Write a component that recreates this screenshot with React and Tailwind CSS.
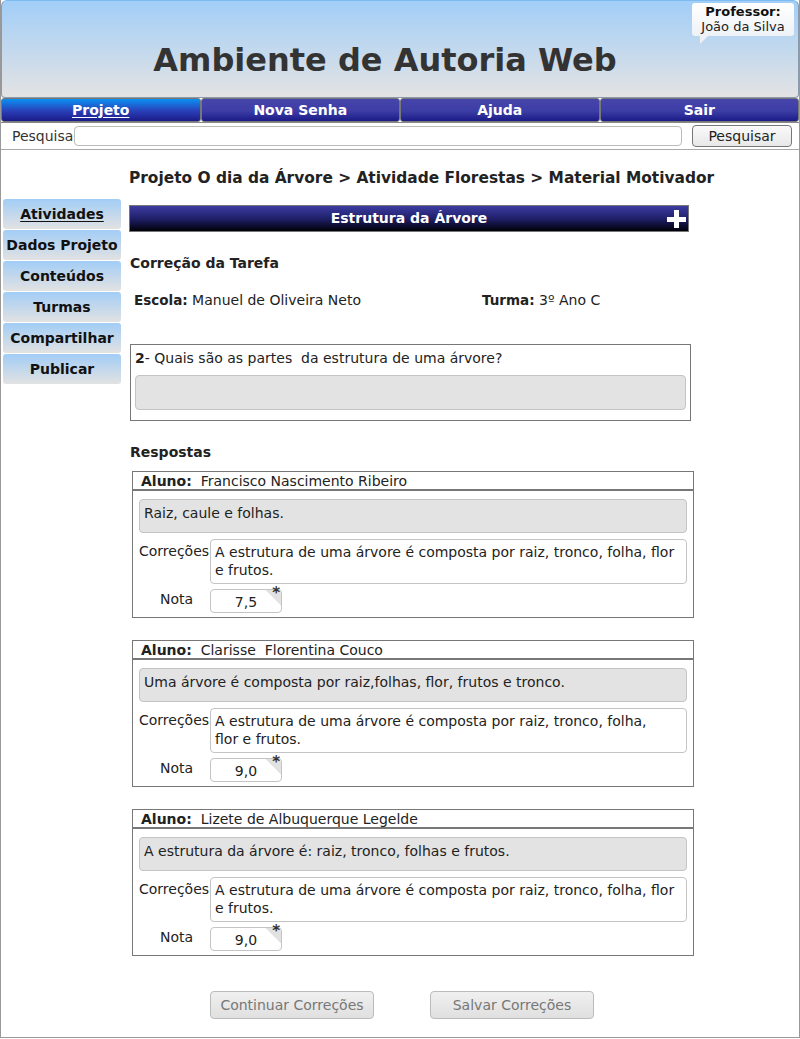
const body = "font-['DejaVu_Sans','Liberation_Sans',sans-serif]";
const bold = "font-['DejaVu_Sans','Liberation_Sans',sans-serif] font-bold";

const TABS = ['Projeto', 'Nova Senha', 'Ajuda', 'Sair'];
const MENU = ['Atividades', 'Dados Projeto', 'Conteúdos', 'Turmas', 'Compartilhar', 'Publicar'];

const ANSWERS = [
  {
    aluno: 'Francisco Nascimento Ribeiro',
    resposta: 'Raiz, caule e folhas.',
    correcao: ['A estrutura de uma árvore é composta por raiz, tronco, folha, flor', 'e frutos.'],
    nota: '7,5',
  },
  {
    aluno: 'Clarisse  Florentina Couco',
    resposta: 'Uma árvore é composta por raiz,folhas, flor, frutos e tronco.',
    correcao: ['A estrutura de uma árvore é composta por raiz, tronco, folha,', 'flor e frutos.'],
    nota: '9,0',
  },
  {
    aluno: 'Lizete de Albuquerque Legelde',
    resposta: 'A estrutura da árvore é: raiz, tronco, folhas e frutos.',
    correcao: ['A estrutura de uma árvore é composta por raiz, tronco, folha, flor', 'e frutos.'],
    nota: '9,0',
  },
];

function AnswerCard({ a }) {
  return (
    <div className="ml-[3px] w-[562px] h-[147px] border border-[#777] bg-white">
      <div className="h-[19px] border-b-[2px] border-[#777] px-2 text-[14px] leading-[18px] text-[#222] whitespace-pre">
        <span className={`${bold} text-[14px]`}>Aluno:</span>{'  '}{a.aluno}
      </div>
      <div className="px-[6px] pt-[8px] pb-[6px]">
        <div className="h-[34px] rounded-[4px] border border-[#c4c4c4] bg-[#e3e3e3] px-[4px] pt-[4px] text-[14px] leading-[18px] text-[#222] whitespace-nowrap">
          {a.resposta}
        </div>
        <div className="mt-[6px] flex">
          <div className="w-[71px] pt-[4px] text-[14px] leading-[16px] text-[#222] whitespace-nowrap">Correções</div>
          <div className="h-[45px] flex-1 rounded-[4px] border border-[#c4c4c4] bg-white px-[4px] pt-[3px] text-[14px] leading-[18px] text-[#222] whitespace-nowrap">
            {a.correcao[0]}
            <br />
            {a.correcao[1]}
          </div>
        </div>
        <div className="mt-[5px] flex items-start">
          <div className="w-[71px] pl-[21px] pt-[1px] text-[14px] leading-[18px] text-[#222]">Nota</div>
          <div className="relative h-[24px] w-[72px] rounded-[4px] border border-[#c4c4c4] bg-white text-center text-[14px] leading-[24px] text-[#222]">
            {a.nota}
            <div className="absolute right-0 top-0 h-[16px] w-[16px] rounded-tr-[4px] bg-[linear-gradient(45deg,#ffffff_50%,#e2e2e2_50%)]" />
            <span className={`${bold} absolute right-[1px] top-[-6px] text-[15px] leading-[18px] text-[#333]`}>*</span>
          </div>
        </div>
      </div>
    </div>
  );
}

export default function App() {
  return (
    <div className={`${body} w-[800px] h-[1039px] bg-white text-[#222]`}>
      <div className="h-[1038px] border-x border-b border-[#999] flex flex-col">
        {/* header */}
        <div className="relative h-[98px] rounded-t-[6px] rounded-b-[4px] border border-[#8a9aab] border-t-[#7cbcf0] bg-[linear-gradient(to_bottom,#a2cef8,#e3e3e3)] flex items-center justify-center">
          <h1 className={`${bold} mt-[22px] mr-[30px] text-[32px] leading-[38px] text-[#333]`}>Ambiente de Autoria Web</h1>
          <div className="absolute right-[4px] top-[2px]">
            <div className="w-[102px] h-[33px] rounded-[3px] bg-[linear-gradient(to_bottom,#ffffff,#eef2f6)] text-center text-[13px] leading-[15px] pt-[1px]">
              <div className={`${bold} text-[13px] text-[#111]`}>Professor:</div>
              <div className="text-[#222]">João da Silva</div>
            </div>
            <div className="ml-[8px] h-0 w-0 border-t-[8px] border-r-[8px] border-t-[#eef2f6] border-r-transparent" />
          </div>
        </div>

        {/* nav */}
        <div className="flex h-[25px] border-b border-[#888]">
          {TABS.map((t, i) => (
            <div
              key={t}
              className={`${bold} flex-1 flex items-center justify-center rounded-[3px] border border-[#777] pt-[1px] text-[14px] text-white ${
                i === 0
                  ? 'bg-[linear-gradient(to_bottom,#0a90f2,#2a3fb8_55%,#1b1b88)] underline underline-offset-2'
                  : 'bg-[linear-gradient(to_bottom,#4545ab,#3d3da6_55%,#1b1b88)]'
              }`}
            >
              {t}
            </div>
          ))}
        </div>

        {/* search */}
        <div className="flex h-[27px] items-center border-b border-[#aaa] pl-[11px] pr-[7px]">
          <span className="text-[14px] text-[#333]">Pesquisa</span>
          <div className="ml-[1px] mr-[10px] h-[20px] flex-1 rounded-[4px] border border-[#bbb] bg-white" />
          <button className="h-[22px] w-[100px] rounded-[4px] border border-[#777] bg-[linear-gradient(to_bottom,#fafafa,#e8e8e8)] text-[14px] text-[#222]">
            Pesquisar
          </button>
        </div>

        {/* body */}
        <div className="flex flex-1">
          <div className="w-[128px] pt-[49px] pl-[2px] flex flex-col gap-[1px]">
            {MENU.map((m, i) => (
              <div
                key={m}
                className={`${bold} h-[30px] w-[118px] rounded-[3px] bg-[linear-gradient(to_bottom,#a2cdf6,#e2e2e2)] flex items-center justify-center text-[14px] text-[#111] ${
                  i === 0 ? 'underline underline-offset-2' : ''
                }`}
              >
                {m}
              </div>
            ))}
          </div>

          <div className="flex-1 pt-[18px]">
            <div className={`${bold} text-[15.4px] leading-[20px] text-[#222]`}>
              Projeto O dia da Árvore &gt; Atividade Florestas &gt; Material Motivador
            </div>

            <div className="relative mt-[17px] h-[27px] w-[560px] border border-[#777] bg-[linear-gradient(to_bottom,#3c3ca2,#20206a_50%,#000008)] flex items-center justify-center">
              <span className={`${bold} text-[14px] text-white`}>Estrutura da Árvore</span>
              <svg className="absolute right-[2px] top-[3px]" width="20" height="20" viewBox="0 0 20 20">
                <rect x="8" y="1" width="5" height="18" fill="#fff" />
                <rect x="1" y="8" width="19" height="5" fill="#fff" />
              </svg>
            </div>

            <div className={`${bold} mt-[21px] ml-[1px] text-[14px] leading-[20px] text-[#222]`}>Correção da Tarefa</div>

            <div className="mt-[17px] ml-[5px] flex text-[14px] leading-[20px]">
              <div className="w-[348px]">
                <span className={`${bold} text-[13.5px]`}>Escola:</span> Manuel de Oliveira Neto
              </div>
              <div>
                <span className={`${bold} text-[13.5px]`}>Turma:</span> 3º Ano C
              </div>
            </div>

            <div className="mt-[34px] ml-[1px] w-[561px] h-[77px] border border-[#777] px-[4px] pt-[4px]">
              <div className="text-[14px] leading-[18px] text-[#222]">
                <span className={`${bold} text-[14px]`}>2</span>- Quais são as partes&nbsp; da estrutura de uma árvore?
              </div>
              <div className="mt-[8px] h-[35px] rounded-[4px] border border-[#c4c4c4] bg-[#e3e3e3]" />
            </div>

            <div className={`${bold} mt-[21px] ml-[1px] text-[14px] leading-[20px] text-[#222]`}>Respostas</div>

            <div className="mt-[9px] flex flex-col gap-[22px]">
              {ANSWERS.map((a) => (
                <AnswerCard key={a.aluno} a={a} />
              ))}
            </div>

            <div className="mt-[35px] ml-[81px] flex gap-[56px]">
              <button className="h-[28px] w-[164px] rounded-[4px] border border-[#bbb] bg-[linear-gradient(to_bottom,#f0f0f0,#e0e0e0)] text-[14px] text-[#777]">
                Continuar Correções
              </button>
              <button className="h-[28px] w-[164px] rounded-[4px] border border-[#bbb] bg-[linear-gradient(to_bottom,#f0f0f0,#e0e0e0)] text-[14px] text-[#777]">
                Salvar Correções
              </button>
            </div>
          </div>
        </div>
      </div>
    </div>
  );
}
